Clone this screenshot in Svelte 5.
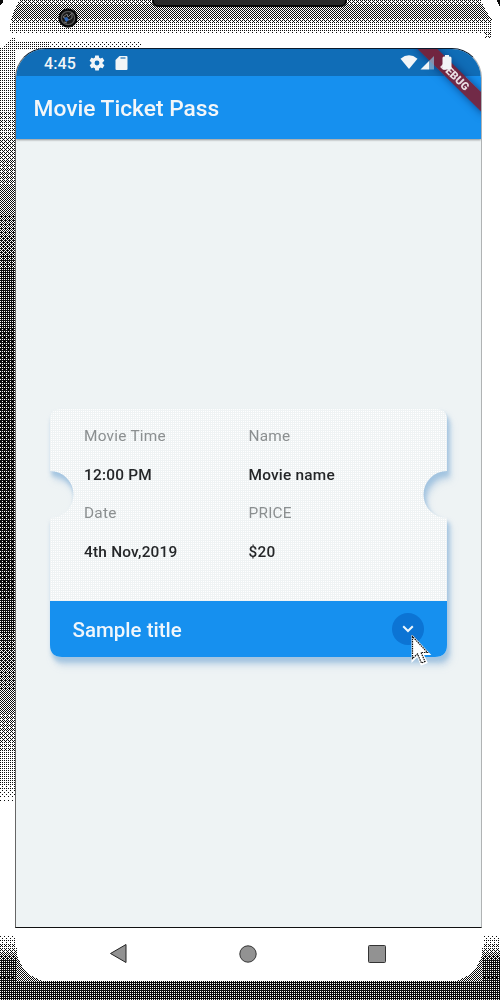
<script>
  import { onMount } from 'svelte';

  const fields = [
    { label: 'Movie Time', value: '12:00 PM' },
    { label: 'Name', value: 'Movie name' },
    { label: 'Date', value: '4th Nov,2019' },
    { label: 'PRICE', value: '$20' },
  ];

  let shell;

  const bayer = [
    [0, 8, 2, 10],
    [12, 4, 14, 6],
    [3, 11, 1, 9],
    [15, 7, 13, 5],
  ];

  // Linear interpolation over [position, density] stops.
  function ramp(v, stops) {
    if (v <= stops[0][0]) return stops[0][1];
    for (let i = 1; i < stops.length; i++) {
      const [b, db] = stops[i];
      const [a, da] = stops[i - 1];
      if (v <= b) return da + ((db - da) * (v - a)) / (b - a);
    }
    return stops[stops.length - 1][1];
  }

  const topStops = [[0, 0.36], [9, 0.5], [17, 0.5], [22, 0.28], [30, 0.22], [33, 0.1], [36, 0]];
  const sideStops = [[41, 0.24], [100, 0.25], [150, 0.38], [200, 0.5], [240, 0.6], [275, 0.74], [350, 0.8], [560, 0.82], [620, 0.76], [680, 0.56], [730, 0.42], [755, 0.25], [785, 0.22], [803, 0]];
  const footStops = [[934, 0], [945, 0.3], [955, 0.5], [963, 0.76], [1000, 0.82]];

  // Ink density of the metal phone body at one pixel.
  function density(x, y) {
    if (y < 38) {
      const edge = y < 34 ? 9 + 10 * Math.pow(1 - y / 34, 2) : 10;
      const right = y < 18 ? 480 + y * 0.55 : 491;
      if (x < 3 && y < 5 - x) return 1;
      if (x > 496 && y < (x - 496) * 2) return 1;
      if (x < edge || x > right) return 0;
      if (x > 484 && y > 30) return 0.3;
      return ramp(y, topStops);
    }
    if (y < 49 && x >= 15 && x < 141) return y < 41 ? 0 : x < 50 ? 0.23 : 0.12;
    if (x < 16 && y < 810) return y < 48 && x < (48 - y) * 1.2 ? 0 : ramp(y, sideStops);
    if (y >= 981) return 0.76;
    if (y > 933) {
      if (x < 16 || x > 482) return ramp(y, footStops);
      const dx = x < 50 ? 50 - x : x > 448 ? x - 448 : 0;
      const dy = y - 947;
      if (dx > 0 && dy > 0 && dx * dx + dy * dy > 34 * 34) return 0.5;
    }
    return 0;
  }

  onMount(() => {
    const ctx = shell.getContext('2d');
    ctx.fillStyle = '#0c0c0c';
    for (let y = 0; y < 1000; y++) {
      for (let x = 0; x < 500; x++) {
        if (density(x, y) > (bayer[y % 4][x % 4] + 0.5) / 16) ctx.fillRect(x, y, 1, 1);
      }
    }
  });
</script>

<div class="phone">
  <canvas class="shell" bind:this={shell} width="500" height="1000"></canvas>
  <div class="speaker"></div>
  <svg class="camera" width="20" height="20" viewBox="0 0 20 20">
    <circle cx="10" cy="10" r="8.500" fill="#555" stroke="#080808" stroke-width="2.400" />
    <circle cx="10" cy="10" r="6" fill="#181818" />
    <path d="M5 9l4-3 1 3 4-4v5l-3 2zM6 14l3 1" fill="none" stroke="#777" stroke-width="1" />
    <path d="M6 10l3-1 2 3-3 2z" fill="#2c64b5" />
  </svg>

  <div class="display">
    <div class="screen">
      <div class="debug"><span>DEBUG</span></div>
      <div class="status">
        <span class="clock">4:45</span>
        <svg class="gear" width="18" height="18" viewBox="0 0 24 24"><path fill="#f2f5f7" fill-rule="evenodd" d="M19.400 13c.1-.6.1-1.300 0-2l2.100-1.600c.2-.2.2-.4.1-.6l-2-3.500c-.1-.2-.4-.3-.6-.2l-2.500 1a7 7 0 0 0-1.700-1l-.4-2.700c0-.2-.2-.4-.4-.4h-4c-.3 0-.5.200-.5.400l-.4 2.700a7 7 0 0 0-1.700 1l-2.500-1c-.2-.1-.5 0-.6.200l-2 3.500c-.1.200-.1.400.1.600L4.600 11c-.1.700-.1 1.400 0 2l-2.100 1.600c-.2.200-.2.400-.1.600l2 3.500c.1.200.4.300.6.200l2.500-1a7 7 0 0 0 1.700 1l.4 2.700c0 .2.200.4.500.4h4c.2 0 .4-.2.400-.4l.4-2.700a7 7 0 0 0 1.700-1l2.500 1c.2.100.5 0 .6-.2l2-3.500c.1-.2.1-.4-.1-.6zM12 15.200a3.200 3.200 0 1 1 0-6.400 3.200 3.200 0 0 1 0 6.400z" /></svg>
        <svg class="sd" width="13" height="16" viewBox="0 0 13 16"><path fill="#f2f5f7" d="M4.500 1h7q1 0 1 1v12q0 1-1 1H1.500q-1 0-1-1V5z" /><path d="M5.500 3h5" stroke="#448dc5" stroke-width="1.500" /></svg>
        <svg class="signals" width="56" height="18" viewBox="0 0 56 18">
          <path fill="#f2f5f7" d="M.5 4.700Q9-2 17.500 4.700L9 15z" />
          <path fill="#f2f5f7" d="M20.500 15.500L29 7v8.500z" />
          <path fill="#8cb4d2" opacity=".75" d="M29 7l5-5v13.500h-5z" />
          <path fill="#f2f5f7" d="M45 1h4v1.500h1q1.500 0 1.500 1.500v10q0 1.500-1.500 1.500h-6q-1.500 0-1.500-1.500V4q0-1.500 1.500-1.500h1z" />
        </svg>
      </div>
      <header>Movie Ticket Pass</header>
      <main>
        <div class="shadow">
          <section class="ticket">
            <div class="fields">
              {#each fields as field}
                <div class="field">
                  <span class="label">{field.label}</span>
                  <span class="value">{field.value}</span>
                </div>
              {/each}
            </div>
            <footer>
              <span>Sample title</span>
              <button aria-label="Expand"><svg width="12" height="8" viewBox="0 0 12 8"><path d="M1.200 1.200L6 6l4.800-4.800" fill="none" stroke="#eef6fc" stroke-width="2" /></svg></button>
            </footer>
          </section>
        </div>
      </main>
    </div>
    <nav>
      <svg width="20" height="22" viewBox="0 0 20 22"><path d="M1.500 10.500L17 1.500v18z" fill="#929292" stroke="#222" /></svg>
      <svg width="20" height="22" viewBox="0 0 20 22"><circle cx="10" cy="11" r="8.200" fill="#929292" stroke="#333" /></svg>
      <svg width="20" height="22" viewBox="0 0 20 22"><rect x="1.500" y="2.500" width="17" height="17" rx="1" fill="#929292" stroke="#333" /></svg>
    </nav>
  </div>

  <svg class="cursor" width="22" height="34" viewBox="0 0 22 34">
    <path d="M1.500 1.500v24l5-5 4 9 5-2-4-8.500h6.500z" fill="#fff" stroke="#fff" stroke-width="2" />
    <path d="M1.500 1.500v22l5-4.500 4 9 3.500-1.500-4-9h6.500z" fill="#fff" stroke="#111" stroke-width="1.200" stroke-dasharray="1.500 .8" />
  </svg>
</div>

<style>
  :global(body) { background: #fff; }
  .phone {
    position: relative;
    box-sizing: border-box;
    width: 500px;
    height: 1000px;
    padding: 48px 18px 0 15px;
    overflow: hidden;
    font-family: Roboto, "Liberation Sans", sans-serif;
  }
  .shell { position: absolute; left: 0; top: 0; }
  .speaker {
    position: absolute;
    left: 152px;
    top: -8px;
    width: 195px;
    height: 15px;
    box-sizing: border-box;
    border: 2px solid #080808;
    border-radius: 0 0 6px 6px;
    background: #292929;
  }
  .camera { position: absolute; left: 58px; top: 8px; }
  .display { position: relative; display: flex; flex-direction: column; }
  .screen {
    position: relative;
    box-sizing: border-box;
    height: 880px;
    display: flex;
    flex-direction: column;
    border: 1px solid #0a1a2c;
    border-left-color: #666;
    border-right-color: #b0b3b4;
    border-bottom-color: #111;
    border-radius: 30px 30px 0 0;
    overflow: hidden;
    background: #eef3f4;
  }
  .status {
    position: relative;
    height: 27px;
    display: flex;
    align-items: center;
    padding: 0 22px 0 28px;
    background: #106db7;
    color: #f2f5f7;
  }
  .clock { width: 44px; padding-top: 1px; font-size: 16px; font-weight: 500; letter-spacing: .1px; }
  .sd { margin-left: 9px; }
  .signals { position: relative; z-index: 3; margin-left: auto; margin-right: 3px; }
  .debug {
    position: absolute;
    z-index: 2;
    right: -22px;
    top: 20px;
    width: 96px;
    height: 14px;
    display: flex;
    align-items: center;
    justify-content: center;
    transform: rotate(44.500deg);
    background: rgba(126, 27, 48, .88);
    box-shadow: 0 0 8px rgba(0, 25, 80, .6);
    color: #eadfe4;
    font-size: 11px;
    font-weight: 900;
  }
  header {
    height: 63px;
    box-sizing: border-box;
    padding: 0 17.500px;
    line-height: 65px;
    font-size: 22.750px;
    font-weight: 500;
    color: #f3f6f8;
    background: #1690ef;
    box-shadow: 0 1px 2px rgba(0, 0, 0, .4);
  }
  main { flex: 1; padding: 270px 34px 0; }
  .shadow { filter: drop-shadow(2px 5px 2px rgba(150, 190, 222, .6)) drop-shadow(2px 4px 2.500px rgba(150, 185, 218, .65)); }
  .ticket {
    height: 248px;
    width: 397px;
    display: flex;
    flex-direction: column;
    clip-path: path("M12 0H385Q397 0 397 10V62A23 23 0 0 0 397 109V236Q397 248 385 248H12Q0 248 0 236V109A23 23 0 0 0 0 62V10Q0 0 12 0Z");
    background: conic-gradient(#fff 25%, #eff3f4 0) 0 0 / 2px 2px;
  }
  .fields {
    height: 192px;
    box-sizing: border-box;
    padding: 17px 34px 0;
    display: grid;
    grid-template-columns: 164.500px 1fr;
    grid-auto-rows: 77px;
  }
  .field { display: flex; flex-direction: column; }
  .label { height: 38.500px; line-height: 20px; font-size: 15.400px; letter-spacing: .24px; color: #8b8f90; }
  .value { line-height: 20px; font-size: 15.400px; font-weight: 500; letter-spacing: .22px; color: #242628; }
  footer {
    height: 56px;
    box-sizing: border-box;
    padding: 0 23px 0 22.500px;
    display: flex;
    align-items: center;
    justify-content: space-between;
    font-size: 20.500px;
    font-weight: 500;
    color: #f0f6fb;
    background: #1690ef;
  }
  footer span { padding-top: 1px; }
  button {
    display: flex;
    align-items: center;
    justify-content: center;
    width: 32px;
    height: 32px;
    padding: 0;
    border: 0;
    border-radius: 50%;
    background: #0c74d4;
  }
  nav { display: flex; gap: 109px; padding: 15px 0 0 94px; }
  .cursor { position: absolute; left: 411px; top: 635px; }
</style>
